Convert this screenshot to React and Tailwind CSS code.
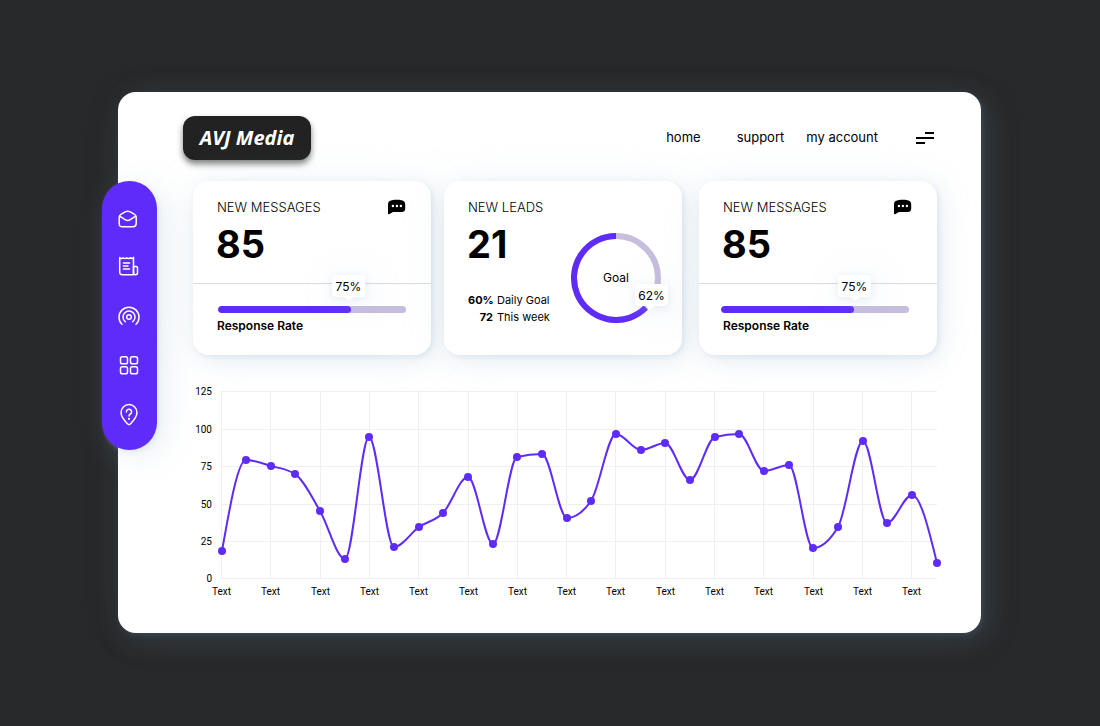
import React from "react";

const ICON = {
  width: 24,
  height: 24,
  viewBox: "0 0 24 24",
  fill: "none",
  stroke: "currentColor",
  strokeWidth: 1.5,
  strokeLinecap: "round",
  strokeLinejoin: "round",
  "aria-hidden": true,
};

function MailIcon() {
  return (
    <svg {...ICON}>
      <path d="M2.200 10.500c0-1.900.5-2.500 2-3.300l4.400-2.500c1.700-.9 2.500-.9 4.200 0l4.400 2.500c1.500.8 2 1.400 2 3.300v6.100c0 2.200-1 3.200-3.200 3.200H5.400c-2.200 0-3.200-1-3.200-3.200z" />
      <path d="M2.600 9.200l5.500 3.400c1.700 1.100 3.500 1.100 5.200 0l5.500-3.400" />
    </svg>
  );
}

function ReceiptIcon() {
  return (
    <svg {...ICON}>
      <path d="M2.700 1.400c1.200 1.400 2.400 1.400 3.500.3 1.200 1.100 2.400 1.100 3.500 0 1.200 1.100 2.400 1.100 3.500 0 1.200 1 2.200.9 3.300-.3v17.300H5.300c-1.800 0-2.600-.8-2.600-2.600z" />
      <path d="M16.500 10.600h2.600c.9 0 1.400.5 1.400 1.400v4.700c0 1.300-.7 2-2 2s-2-.7-2-2z" />
      <path d="M6.400 7h6.200M6.400 10h4.600M6.400 13h6.200" />
    </svg>
  );
}

function BroadcastIcon() {
  return (
    <svg {...ICON}>
      <circle cx="12" cy="12" r="2.300" />
      <path d="M8.300 16.700a6 6 0 1 1 7.400 0" />
      <path d="M5 19.300a10 10 0 1 1 14 0" />
    </svg>
  );
}

function GridIcon() {
  return (
    <svg {...ICON}>
      <rect x="3.500" y="2.800" width="7" height="7" rx="1.800" />
      <rect x="13.500" y="2.800" width="7" height="7" rx="1.800" />
      <rect x="3.500" y="12.800" width="7" height="7" rx="1.800" />
      <rect x="13.500" y="12.800" width="7" height="7" rx="1.800" />
    </svg>
  );
}

function PinHelpIcon() {
  return (
    <svg {...ICON}>
      <path d="M12 1.600a8 8 0 0 1 8 8c0 4.300-3.100 7.800-6.400 11.200-1.200 1.200-2 1.200-3.200 0C7.100 17.400 4 13.900 4 9.600a8 8 0 0 1 8-8z" />
      <path d="M9.400 8.900a2.600 2.600 0 1 1 4 2.100c-.9.6-1.400 1-1.400 2" />
      <path d="M12 15.800v.2" strokeWidth="2" />
    </svg>
  );
}

function ChatIcon() {
  return (
    <svg width="19" height="16" viewBox="0 0 19 16" aria-hidden="true">
      <path d="M4 1.200C7 .7 10.500.7 13.500 1.200c2.300.3 3.700 1.700 3.700 4v4.200c0 2.300-1.300 3.600-3.600 3.600H5L1 15.200C.3 15.500 0 15.200 0 14.500V5.400C0 2.900 1.300 1.600 4 1.200z" fill="#000" />
      <g fill="#fff">
        <circle cx="4.900" cy="7" r="1.200" />
        <circle cx="8.900" cy="7" r="1.200" />
        <circle cx="12.900" cy="7" r="1.200" />
      </g>
    </svg>
  );
}

const NAV_ICONS = [
  ["Mail", MailIcon],
  ["Reports", ReceiptIcon],
  ["Broadcast", BroadcastIcon],
  ["Apps", GridIcon],
  ["Help", PinHelpIcon],
];

const CARD =
  "relative min-w-0 flex-1 rounded-2xl bg-white shadow-[2px_2px_4px_rgba(174,204,228,0.3),4px_6px_24px_rgba(160,180,200,0.2),0_0_48px_rgba(174,204,220,0.12)]";

const BUBBLE =
  "flex h-[22px] w-[33px] items-center justify-center rounded-sm bg-white pt-px text-xs shadow-[0_2px_8px_rgba(150,180,210,0.2),4px_4px_32px_rgba(174,204,228,0.25)]";

function MessagesCard({ className, barClass }) {
  return (
    <section className={`${CARD} ${className}`}>
      <div className="flex h-[103px] flex-col border-b border-[#dcdae3] px-6 pt-4">
        <div className="flex items-center justify-between">
          <h2 className="text-[13px] leading-5 font-light">NEW MESSAGES</h2>
          <ChatIcon />
        </div>
        <p className="-ml-px text-[38px] leading-[54px] font-bold">85</p>
      </div>
      <div className={`pt-[22px] ${barClass}`}>
        <div
          role="progressbar"
          aria-label="Response Rate"
          aria-valuenow={75}
          className="h-[7px] overflow-hidden rounded-full bg-[#c7bddd]"
        >
          <div className="h-full w-[71%] rounded-full bg-[#5f2bf9]" />
        </div>
      </div>
      <p className="px-6 pt-1 text-xs leading-[18px] font-semibold">Response Rate</p>
      <div className="absolute top-[94px] left-[139px]">
        <div className={BUBBLE}>75%</div>
        <svg className="mx-auto block" width="10" height="4" viewBox="0 0 10 4" aria-hidden="true">
          <path d="M0 0h10L5 4z" fill="#fff" />
        </svg>
      </div>
    </section>
  );
}

function LeadsCard() {
  return (
    <section className={`${CARD} ml-[13px]`}>
      <div className="flex flex-col px-6 pt-4">
        <h2 className="text-[13px] leading-5 font-light">NEW LEADS</h2>
        <p className="-ml-px text-[38px] leading-[54px] font-bold">21</p>
        <dl className="mt-[21px] grid grid-cols-[25px_1fr] gap-x-1 text-[11px] leading-[17px]">
          <dt className="text-right font-bold">60%</dt>
          <dd>Daily Goal</dd>
          <dt className="text-right font-bold">72</dt>
          <dd>This week</dd>
        </dl>
      </div>
      <div className="absolute top-[52px] right-[21px] flex h-[90px] w-[90px] items-center justify-center">
        <svg className="absolute inset-0" width="90" height="90" viewBox="0 0 90 90" aria-hidden="true">
          <circle cx="45" cy="45" r="42" fill="none" stroke="#c7bddd" strokeWidth="6" />
          <path d="M45 3A42 42 0 1 0 74.700 74.700" fill="none" stroke="#5f2bf9" strokeWidth="6" />
        </svg>
        <span className="relative text-xs">Goal</span>
        <div className="absolute top-[51px] left-[64px]">
          <div className={BUBBLE}>62%</div>
          <svg className="ml-2 block" width="12" height="5" viewBox="0 0 12 5" aria-hidden="true">
            <path d="M3 0h9L6 5z" fill="#fff" />
          </svg>
        </div>
      </div>
    </section>
  );
}

const POINTS = [
  [222, 551], [246, 460], [271, 466], [295, 474], [320, 511], [345, 559],
  [369, 437], [394, 547], [419, 527], [443, 513], [468, 477], [493, 544],
  [517, 457], [542, 454], [567, 518], [591, 501], [616, 434], [641, 450],
  [665, 443], [690, 480], [715, 437], [739, 434], [764, 471], [789, 465],
  [813, 548], [838, 527], [863, 441], [887, 523], [912, 495], [937, 563],
];

// Monotone cubic interpolation: the line never overshoots its points.
function smoothPath(pts) {
  const n = pts.length;
  const slope = pts.slice(1).map((p, i) => (p[1] - pts[i][1]) / (p[0] - pts[i][0]));
  const m = pts.map((_, i) => {
    if (i === 0 || i === n - 1) return 0;
    const a = slope[i - 1];
    const b = slope[i];
    if (a * b <= 0) return 0;
    return Math.sign(a) * 2 * Math.min(Math.abs(a), Math.abs(b), Math.abs(a + b) / 4);
  });
  m[0] = (3 * slope[0] - m[1]) / 2;
  m[n - 1] = (3 * slope[n - 2] - m[n - 2]) / 2;
  let d = `M${pts[0][0]} ${pts[0][1]}`;
  for (let i = 0; i < n - 1; i++) {
    const [x0, y0] = pts[i];
    const [x1, y1] = pts[i + 1];
    const h = (x1 - x0) / 3;
    d += `C${x0 + h} ${y0 + m[i] * h} ${x1 - h} ${y1 - m[i + 1] * h} ${x1} ${y1}`;
  }
  return d;
}

const Y_TICKS = [
  [391.5, 125], [429.5, 100], [466.5, 75], [504.5, 50], [541.5, 25], [578.5, 0],
];
const X_TICKS = [221.5, 270.5, 320.5, 369.5, 418.5, 468.5, 517.5, 566.5, 615.5, 665.5, 714.5, 763.5, 813.5, 862.5, 911.5];

function Chart() {
  return (
    <svg
      className="mt-[26px] block h-auto w-full overflow-visible"
      viewBox="193 381 744 220"
      role="img"
      aria-label="Line chart"
    >
      <g stroke="#efefef" strokeWidth="1">
        {Y_TICKS.map(([y]) => (
          <line key={y} x1="221" x2="937" y1={y} y2={y} />
        ))}
        {X_TICKS.map((x) => (
          <line key={x} x1={x} x2={x} y1="391" y2="579" />
        ))}
      </g>
      <g className="font-[Roboto,sans-serif] text-[10px]" fill="#000">
        {Y_TICKS.map(([y, v]) => (
          <text key={v} x="212" y={Math.round(y + 3)} textAnchor="end">{v}</text>
        ))}
        {X_TICKS.map((x) => (
          <text key={x} x={x} y="595" textAnchor="middle">Text</text>
        ))}
      </g>
      <path d={smoothPath(POINTS)} fill="none" stroke="#5f2bf9" strokeWidth="2" />
      <g fill="#5f2bf9">
        {POINTS.map(([x, y]) => (
          <circle key={x} cx={x} cy={y} r="4" />
        ))}
      </g>
    </svg>
  );
}

export default function App() {
  return (
    <div className="flex min-h-screen items-center justify-center bg-[#28292a] pr-[119px] pb-px pl-[118px] font-[Inter,sans-serif] text-black">
      <div className="w-full max-w-[863px] rounded-[18px] bg-white shadow-[2px_2px_6px_rgba(100,150,190,0.2),8px_8px_32px_rgba(100,140,165,0.18),0_4px_40px_rgba(100,120,130,0.08)]">
        <header className="flex items-center pt-6 pr-[47px] pl-[65px]">
          <a
            href="#"
            className="flex h-11 w-32 items-center justify-center rounded-xl bg-[#222] font-['Open_Sans',sans-serif] text-xl font-bold text-white italic shadow-[0_4px_6px_rgba(0,0,0,0.5)] [font-kerning:none]"
          >
            AVJ Media
          </a>
          <nav className="ml-auto flex items-center text-[13px]">
            <a href="#" className="mr-9">home</a>
            <a href="#" className="mr-[22px]">support</a>
            <a href="#">my account</a>
          </nav>
          <button type="button" aria-label="Menu" className="ml-[38px]">
            <svg width="18" height="12" viewBox="0 0 18 12" fill="#000" aria-hidden="true">
              <path d="M9 0h9v2H9zM0 5h18v2H0zM0 10h9v2H0z" />
            </svg>
          </button>
        </header>

        <div className="mt-[21px] flex items-start pr-11 pb-8">
          <aside className="-ml-4 flex w-[55px] shrink-0 flex-col items-center gap-[25px] rounded-full bg-[#5f2bf9] pt-[26px] pr-0.5 pb-[23px] text-white shadow-[2px_2px_4px_rgba(174,204,228,0.3),8px_6px_32px_rgba(150,180,200,0.22)]">
            {NAV_ICONS.map(([label, Icon]) => (
              <button key={label} type="button" aria-label={label}>
                <Icon />
              </button>
            ))}
          </aside>
          <main className="ml-9 min-w-0 flex-1">
            <div className="flex h-[174px]">
              <MessagesCard className="" barClass="mx-[25px]" />
              <LeadsCard />
              <MessagesCard className="ml-[17px]" barClass="mr-7 ml-[22px]" />
            </div>
            <Chart />
          </main>
        </div>
      </div>
    </div>
  );
}
